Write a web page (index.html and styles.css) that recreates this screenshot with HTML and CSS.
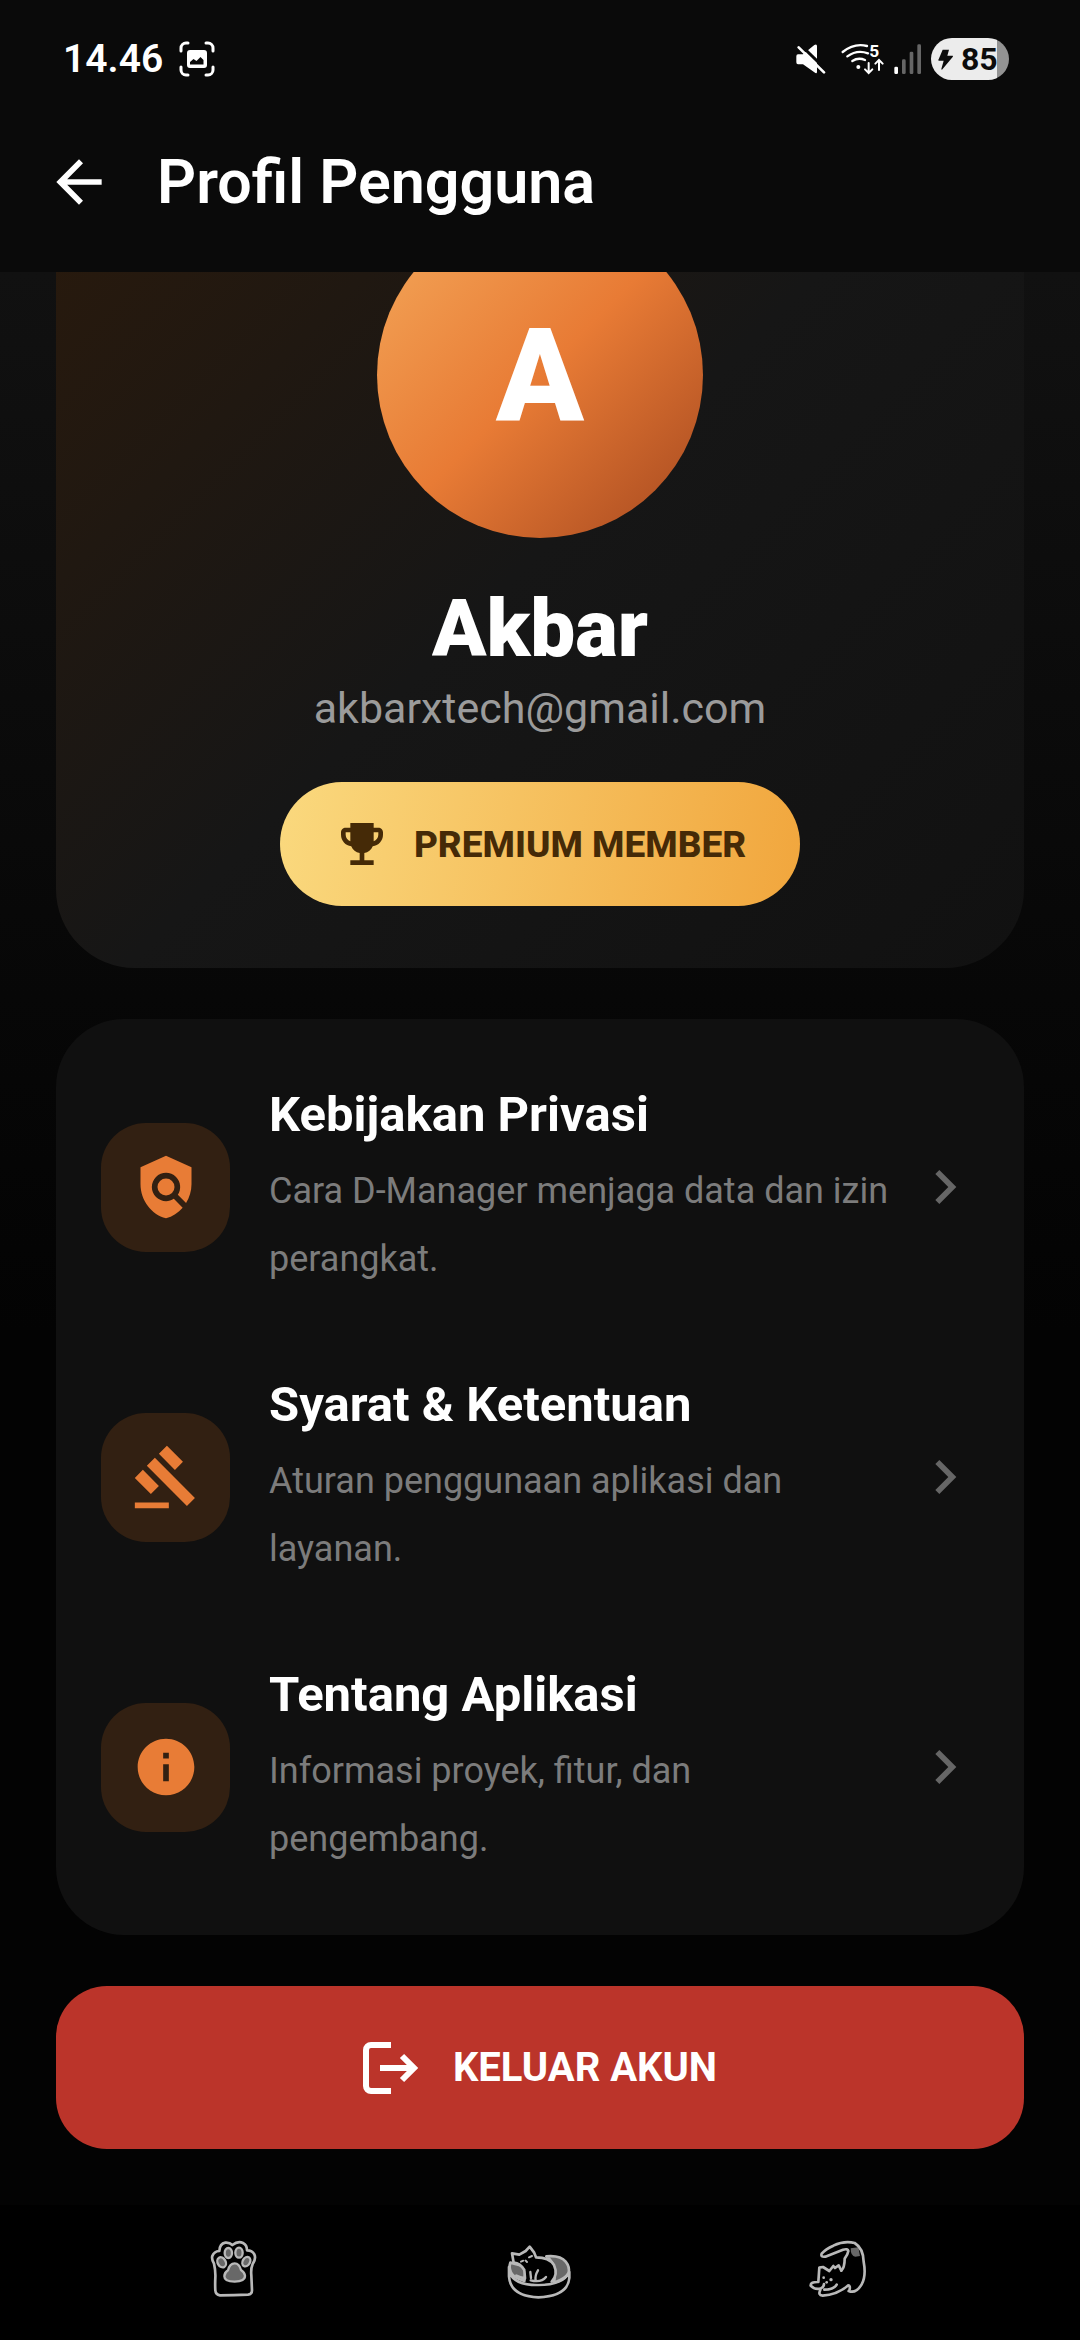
FILE: index.html
```html
<!DOCTYPE html>
<html lang="id">
<head>
<meta charset="utf-8">
<meta name="viewport" content="width=device-width, initial-scale=1">
<title>Profil Pengguna</title>
<link rel="stylesheet" href="styles.css">
</head>
<body>
<div class="screen">
  <header class="top">
    <div class="status">
      <span class="clock">14.46</span>
      <svg class="shot" viewBox="0 0 36 36" width="36" height="36" fill="none" stroke="#fff" stroke-width="3" stroke-linecap="round" aria-hidden="true">
        <path d="M2 10V7a5 5 0 0 1 5-5h2M27 2h2a5 5 0 0 1 5 5v3M34 26v3a5 5 0 0 1-5 5h-2M9 34H7a5 5 0 0 1-5-5v-3"/>
        <path fill="#fff" stroke="none" fill-rule="evenodd" d="M11 9h14a3 3 0 0 1 3 3v12a3 3 0 0 1-3 3H11a3 3 0 0 1-3-3V12a3 3 0 0 1 3-3zM11 23.500h13.500V19l-3-3-4 4-3-2-3.500 3z"/>
      </svg>
      <div class="signals">
        <svg viewBox="104 71 90 90" width="30" height="30" aria-hidden="true">
          <path fill="#fff" d="M110 102h15l34-28q8-5 8 4v76q0 8-8 2l-34-24h-15q-5 0-5-6v-18q0-6 5-6z"/>
          <path stroke="#0a0a0a" stroke-width="9" d="M118 74l80 78"/>
          <path stroke="#fff" stroke-width="8" stroke-linecap="round" d="M112 81l76 75"/>
        </svg>
        <svg class="wifi" viewBox="240 60 132 120" width="44" height="40" fill="none" stroke="#fff" stroke-width="7" stroke-linecap="round" aria-hidden="true">
          <path d="M245 99q35-28 73-18M259 112q29-21 62-9M274 126q18-12 38-3"/>
          <circle cx="292" cy="144" r="6" fill="#fff" stroke="none"/>
          <path stroke-width="6" d="M323 132v28M312 151l11 11 11-11M354 153v-28M343 134l11-11 11 11"/>
          <text x="325" y="114" font-size="52" font-weight="700" fill="#fff" stroke="none">5</text>
        </svg>
        <svg viewBox="398 70 84 93" width="28" height="31" fill="#666" aria-hidden="true">
          <rect x="399" y="138" width="11" height="22" rx="4" fill="#fff"/>
          <rect x="422" y="116" width="11" height="44" rx="4"/>
          <rect x="445" y="93" width="11" height="67" rx="4"/>
          <rect x="468" y="71" width="11" height="89" rx="4"/>
        </svg>
        <span class="battery">
          <svg viewBox="533 85 45 63" width="15" height="21" aria-hidden="true"><path fill="#0c0c0c" d="M547 87h19l-5 18h16q2 2 0 4l-32 38q-2 0-2-2l7-25h-15q-2-2 0-4z"/></svg>
          85
        </span>
      </div>
    </div>
    <div class="appbar">
      <button class="back" aria-label="Kembali">
        <svg viewBox="0 0 24 24" width="68" height="68" fill="#fff" aria-hidden="true"><path d="M20 11H7.830l5.590-5.590L12 4l-8 8 8 8 1.410-1.410L7.830 13H20v-2z"/></svg>
      </button>
      <h1>Profil Pengguna</h1>
    </div>
  </header>

  <main class="content">
    <section class="profile">
      <div class="avatar">A</div>
      <h2>Akbar</h2>
      <p class="email">akbarxtech@gmail.com</p>
      <div class="badge">
        <svg viewBox="0 0 24 24" width="56" height="56" fill="#452a07" aria-hidden="true"><path d="M19 5h-2V3H7v2H5c-1.100 0-2 .9-2 2v1c0 2.550 1.920 4.630 4.390 4.940.63 1.500 1.980 2.630 3.610 2.960V19H7v2h10v-2h-4v-3.100c1.630-.33 2.980-1.460 3.610-2.960C19.080 12.630 21 10.550 21 8V7c0-1.100-.9-2-2-2zM5 8V7h2v3.820C5.840 10.400 5 9.300 5 8zm14 0c0 1.300-.84 2.400-2 2.820V7h2v1z"/></svg>
        <span>PREMIUM MEMBER</span>
      </div>
    </section>

    <nav class="menu" aria-label="Informasi">
      <a class="row" href="#privasi">
        <span class="tile"><svg viewBox="0 0 24 24" width="68" height="68" fill="#e87c36" aria-hidden="true"><path d="M21 5l-9-4-9 4v6c0 5.550 3.840 10.740 9 12 2.300-.56 4.330-1.900 5.880-3.710l-3.120-3.120c-1.940 1.290-4.580 1.070-6.290-.64-1.950-1.950-1.950-5.120 0-7.070 1.950-1.950 5.120-1.950 7.070 0 1.710 1.710 1.920 4.350.64 6.290l2.900 2.900C20.290 15.690 21 13.380 21 11V5z"/><circle cx="12" cy="12" r="3"/></svg></span>
        <span class="copy"><strong>Kebijakan Privasi</strong><span>Cara D-Manager menjaga data dan izin perangkat.</span></span>
        <svg class="chev" viewBox="0 0 24 24" width="68" height="68" aria-hidden="true"><path d="M10 6L8.590 7.410 13.170 12l-4.580 4.590L10 18l6-6z"/></svg>
      </a>
      <a class="row" href="#syarat">
        <span class="tile"><svg viewBox="0 0 24 24" width="68" height="68" fill="#e87c36" aria-hidden="true"><path d="M1 21h12v2H1zM5.240 8.070l2.830-2.830 14.140 14.140-2.830 2.830zM12.320 1l5.660 5.660-2.830 2.830-5.660-5.660zM3.830 9.480l5.660 5.660-2.830 2.830L1 12.310z"/></svg></span>
        <span class="copy"><strong>Syarat &amp; Ketentuan</strong><span>Aturan penggunaan aplikasi dan layanan.</span></span>
        <svg class="chev" viewBox="0 0 24 24" width="68" height="68" aria-hidden="true"><path d="M10 6L8.590 7.410 13.170 12l-4.580 4.590L10 18l6-6z"/></svg>
      </a>
      <a class="row" href="#tentang">
        <span class="tile"><svg viewBox="0 0 24 24" width="68" height="68" fill="#e87c36" aria-hidden="true"><path d="M12 2C6.480 2 2 6.480 2 12s4.480 10 10 10 10-4.480 10-10S17.520 2 12 2zm1 15h-2v-6h2v6zm0-8h-2V7h2v2z"/></svg></span>
        <span class="copy"><strong>Tentang Aplikasi</strong><span>Informasi proyek, fitur, dan pengembang.</span></span>
        <svg class="chev" viewBox="0 0 24 24" width="68" height="68" aria-hidden="true"><path d="M10 6L8.590 7.410 13.170 12l-4.580 4.590L10 18l6-6z"/></svg>
      </a>
    </nav>

    <button class="logout">
      <svg viewBox="0 0 56 52" width="56" height="52" fill="none" stroke="#fff" stroke-width="6" aria-hidden="true">
        <path d="M28 3H8a5 5 0 0 0-5 5v36a5 5 0 0 0 5 5h20M17 26h34M39 14l12 12-12 12"/>
      </svg>
      <span>KELUAR AKUN</span>
    </button>
  </main>

  <footer class="sysnav">
    <button aria-label="Aplikasi terbaru">
      <svg viewBox="0 0 270 270" width="90" height="90" fill="none" stroke="#b9b9b9" stroke-width="8" stroke-linejoin="round" stroke-linecap="round" aria-hidden="true">
        <path d="M76 208q-1-18 0-38t-4-42q-8-14-5-23 5-14 21-15 1-22 18-25 13-1 21 7 17-13 32-6 12 6 12 22 16 0 22 12 6 13-5 29-6 14-4 34l2 45q0 12-12 13-42 2-84 2-13-2-14-15z"/>
        <g fill="#686868" stroke-width="7"><ellipse cx="115" cy="96" rx="11" ry="15"/><ellipse cx="147" cy="95" rx="11" ry="15"/><ellipse cx="95" cy="124" rx="12" ry="16" transform="rotate(-30 95 124)"/><ellipse cx="169" cy="122" rx="11" ry="15" transform="rotate(30 169 122)"/>
        <path d="M103 166q0-11 11-18 5-21 20-21 14 0 19 20 11 7 12 17 1 17-31 18-31 0-31-16z"/></g>
      </svg>
    </button>
    <button aria-label="Beranda">
      <svg viewBox="0 0 270 270" width="90" height="90" fill="none" stroke="#b9b9b9" stroke-width="8" stroke-linejoin="round" stroke-linecap="round" aria-hidden="true">
        <path fill="#686868" d="M160 106q42-4 58 16 13 16 9 34-10 18-44 29 10-55-23-79z"/>
        <path fill="#686868" d="M52 125q-8 25 14 43 9 6 28 12l4-32-14-15z"/>
        <path d="M48 138v28q4 60 88 63 88-3 93-58v-18q-18 39-93 39-72 1-87-39"/>
        <path fill="#000" stroke="none" d="M62 125l-5-28 22 4 19-11 12-13 13 17 6 15q40 0 54 23 13 30-7 50-60 15-80-10l-2-25q-15-22-32-22z"/>
        <path d="M62 125l-5-28 22 4 19-11 12-13 13 17 6 15q40 0 54 23 13 30-7 50M94 147q-12-20-32-22M94 147l2 25q-15-2-26-8"/>
        <path d="M112 153l2 18M135 148q-10 17-7 30M159 168q-14 18-46 10" stroke-width="7"/>
        <path d="M84 122l7-3M108 109l9-4M98 119l4 4" stroke-width="6"/>
      </svg>
    </button>
    <button aria-label="Kembali">
      <svg viewBox="0 0 270 270" width="90" height="90" fill="none" stroke="#b9b9b9" stroke-width="8" stroke-linejoin="round" stroke-linecap="round" aria-hidden="true">
        <path fill="#686868" stroke="none" d="M167 82q0 24 14 25l14-2-5-26z"/>
        <path d="M161 210q22 9 39-20 14-25 6-68-1-40-27-56-31-8-64 8-23 10-35 24-4 11 11 9l53-21q15-4 16 4-2 12-11 23 0 26-10 36"/>
        <path d="M139 149l-8-16-11 8-5-6-12 15-19-12-11 2-3 43M70 183q-24-1-23 11 10 12 29 9M76 203q11-4 11-14M76 207q-8 16 7 17 47-4 77-31 6 0 4 12M88 206q28 0 37-15"/>
        <g fill="#b9b9b9" stroke="none"><circle cx="86" cy="170" r="4"/><circle cx="108" cy="176" r="5"/><circle cx="95" cy="184" r="4"/></g>
      </svg>
    </button>
  </footer>
</div>
</body>
</html>
```
FILE: styles.css
```css
* { box-sizing: border-box; }

body {
  margin: 0;
  background: #020202;
  color: #fff;
  font-family: Roboto, "Noto Sans", sans-serif;
}

h1, h2, p { margin: 0; }

button {
  border: 0;
  padding: 0;
  background: none;
  color: inherit;
  font: inherit;
}

svg { display: block; flex: none; }

.screen {
  min-height: 100vh;
  display: flex;
  flex-direction: column;
}

/* Header: status bar and app bar */
.top {
  position: relative;
  z-index: 1;
  background: #0a0a0a;
  padding-bottom: 26px;
}

.status {
  height: 118px;
  padding: 0 71px 0 63px;
  display: flex;
  align-items: center;
}

.clock {
  font-size: 39px;
  font-weight: 600;
  margin-right: 16px;
}

.signals {
  margin-left: auto;
  display: flex;
  align-items: center;
  gap: 9px;
}

.wifi { margin-left: 6px; }

.battery {
  width: 78px;
  height: 42px;
  padding-left: 7px;
  border-radius: 21px;
  background: linear-gradient(to right, #ececec 85%, #939393 85%);
  color: #0c0c0c;
  display: flex;
  align-items: center;
  gap: 8px;
  font-size: 32px;
  font-weight: 700;
}

.appbar {
  height: 128px;
  padding: 0 45px;
  display: flex;
  align-items: center;
  gap: 44px;
}

h1 {
  font-size: 61px;
  font-weight: 600;
  line-height: 72px;
}

/* Scrolled content */
.content {
  flex: 1;
  overflow: hidden;
  padding: 0 56px 56px;
  display: flex;
  flex-direction: column;
  gap: 51px;
  background: linear-gradient(#111 0, #080808 640px, #030303 1060px);
}

.profile {
  margin-top: -140px;
  padding: 80px 45px 62px;
  border-radius: 79px;
  background: linear-gradient(135deg, #2a1a0c, #161616 50%, #111);
  display: flex;
  flex-direction: column;
  align-items: center;
}

.avatar {
  width: 326px;
  height: 326px;
  border-radius: 50%;
  background: linear-gradient(135deg, #f4a85a, #e87b35 50%, #a5481f);
  display: flex;
  align-items: center;
  justify-content: center;
  font-size: 129px;
  font-weight: 900;
}

h2 {
  margin-top: 44px;
  font-size: 80px;
  font-weight: 900;
  line-height: 94px;
}

.email {
  margin-top: 8px;
  font-size: 43px;
  line-height: 49px;
  color: #9b9b9b;
}

.badge {
  margin-top: 49px;
  height: 124px;
  padding: 0 54px;
  border-radius: 62px;
  background: linear-gradient(100deg, #fad97e, #f1a63d);
  color: #452a07;
  display: flex;
  align-items: center;
  gap: 24px;
  font-size: 37px;
  font-weight: 800;
}

.menu {
  padding: 23px 0;
  border-radius: 68px;
  background: #101010;
}

.row {
  min-height: 290px;
  padding: 0 45px;
  display: flex;
  align-items: center;
  color: inherit;
  text-decoration: none;
}

.tile {
  width: 129px;
  height: 129px;
  flex: none;
  margin-right: 39px;
  border-radius: 45px;
  background: #322012;
  display: flex;
  align-items: center;
  justify-content: center;
}

.copy {
  flex: 1;
  padding: 6px 16px 0 0;
  display: flex;
  flex-direction: column;
  gap: 14px;
  font-size: 36px;
  line-height: 68px;
  color: #7c7c7c;
}

.copy strong {
  font-size: 49px;
  line-height: 56px;
  color: #fff;
}

.chev { fill: #666; }

.logout {
  height: 163px;
  border-radius: 51px;
  background: #bb342a;
  display: flex;
  align-items: center;
  justify-content: center;
  gap: 34px;
  font-size: 40px;
  font-weight: 700;
}

/* System navigation */
.sysnav {
  height: 135px;
  padding: 0 195px 14px 190px;
  background: #000;
  display: flex;
  align-items: center;
  justify-content: space-between;
}
```
